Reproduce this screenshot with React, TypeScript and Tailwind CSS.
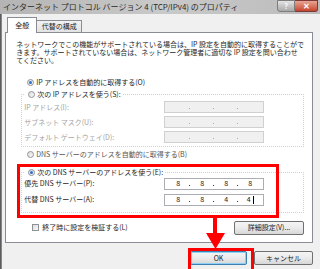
import React from "react";

const JP = "font-['Noto_Sans_CJK_JP','Noto_Sans',sans-serif]";

function Radio({ checked }: { checked?: boolean }) {
  return (
    <span className="flex h-[7px] w-[7px] shrink-0 items-center justify-center rounded-full border border-[#8e9297] bg-gradient-to-br from-[#dcdcdc] to-[#fafafa]">
      {checked && <span className="h-[3px] w-[3px] rounded-full bg-[#2a6fcf]" />}
    </span>
  );
}

function IpField({ values, disabled, cursor }: { values: string[]; disabled?: boolean; cursor?: boolean }) {
  return (
    <div
      className={`flex h-[12px] w-[100px] items-center pl-[2px] border ${
        disabled ? "border-[#d0d0d0] bg-[#f0f0f0]" : "border-[#abadb3] bg-white"
      }`}
    >
      {[0, 1, 2, 3].map(i => (
        <React.Fragment key={i}>
          <span className="flex h-full w-[22px] items-center justify-center text-[7px] leading-none text-[#222]">
            {values[i]}
            {cursor && i === 3 && <span className="ml-[2px] h-[8px] w-[1px] bg-black" />}
          </span>
          {i < 3 && (
            <span className="flex h-full w-[2px] items-end pb-[3px]">
              <span className={`h-[1px] w-[1px] ${disabled ? "bg-[#a8a8a8]" : "bg-[#333]"}`} />
            </span>
          )}
        </React.Fragment>
      ))}
    </div>
  );
}

function Btn({ label, focus, w }: { label: string; focus?: boolean; w: string }) {
  return (
    <div
      className={`flex h-[14px] ${w} items-center justify-center rounded-[2px] border text-[7px] leading-none text-[#222] bg-gradient-to-b from-[#f4f4f4] via-[#ebebeb] to-[#d6d6d6] ${
        focus ? "border-[#3c7fb1] shadow-[inset_0_0_0_1px_#8ed0f5]" : "border-[#707070]"
      }`}
    >
      {label}
    </div>
  );
}

export default function App() {
  return (
    <div className={`relative h-[269px] w-[320px] overflow-hidden bg-[#f0f0f0] ${JP}`}>
      {/* タイトルバー */}
      <div className="flex h-[14px] items-start bg-gradient-to-r from-[#b4b4b4] via-[#c9c9c9] to-[#bcbcbc]">
        <p className="pl-[3px] pt-[2px] text-[8px] leading-[9px] text-[#2a2a2a] whitespace-nowrap">
          インターネット プロトコル バージョン 4 (TCP/IPv4) のプロパティ
        </p>
        <div className="ml-auto mr-[2px] flex">
          <div className="flex h-[12px] w-[18px] items-center justify-center rounded-bl-[3px] border border-[#7d7d7d] bg-gradient-to-b from-[#e4e4e4] to-[#a9a9a9] text-[7px] font-bold leading-none text-white">
            ?
          </div>
          <div className="flex h-[12px] w-[23px] items-center justify-center rounded-br-[3px] border border-l-0 border-[#7a3a3a] bg-gradient-to-b from-[#e8a493] to-[#c5432e] text-[8px] font-bold leading-none text-white">
            ✕
          </div>
        </div>
      </div>

      <div className="flex h-[255px]">
        <div className="w-[3px] bg-gradient-to-r from-[#4a4a4a] to-[#9a9a9a]" />
        <div className="flex flex-1 flex-col pl-[3px] pr-[7px]">
          {/* タブ */}
          <div className="flex h-[18px] items-end pl-[2px] pt-[3px]">
            <div className="relative z-10 -mb-[1px] flex h-[16px] w-[30px] items-center justify-center border border-b-0 border-[#898c95] bg-white text-[7px] text-[#222]">
              全般
            </div>
            <div className="flex h-[12px] w-[45px] items-center justify-center border border-b-0 border-l-0 border-[#898c95] bg-gradient-to-b from-[#f2f2f2] to-[#e3e3e3] text-[7px] text-[#222]">
              代替の構成
            </div>
          </div>

          {/* パネル */}
          <div className="flex h-[211px] flex-col border border-[#898c95] bg-white pl-[10px] pr-[8px] text-[7px] text-[#1e1e1e]">
            <div className="mt-[7px] whitespace-nowrap text-[7px] leading-[8px]">
              <p>ネットワークでこの機能がサポートされている場合は、IP 設定を自動的に取得することがで</p>
              <p>きます。サポートされていない場合は、ネットワーク管理者に適切な IP 設定を問い合わせ</p>
              <p>てください。</p>
            </div>

            <div className="mt-[14px] flex h-[9px] items-center gap-[2px] pl-[11px]">
              <Radio checked />
              <span className="leading-none">IP アドレスを自動的に取得する(O)</span>
            </div>

            <fieldset className="mt-[3px] ml-[5px] h-[57px] border border-dotted border-[#c9d3d8] pl-[2px] pr-0">
              <legend className="flex h-[9px] items-center gap-[2px] pl-[4px] pr-[2px]">
                <Radio />
                <span className="leading-none">次の IP アドレスを使う(S):</span>
              </legend>
              <div className="flex flex-col gap-[3px] pt-[2px] text-[#a3a3a3]">
                {["IP アドレス(I):", "サブネット マスク(U):", "デフォルト ゲートウェイ(D):"].map(l => (
                  <div key={l} className="flex h-[12px] items-center">
                    <span className="w-[140px] leading-none">{l}</span>
                    <IpField values={["", "", "", ""]} disabled />
                  </div>
                ))}
              </div>
            </fieldset>

            <div className="mt-[3px] flex h-[9px] items-center gap-[2px] pl-[11px] text-[#555]">
              <Radio />
              <span className="leading-none">DNS サーバーのアドレスを自動的に取得する(B)</span>
            </div>

            <fieldset className="mt-[9px] ml-[5px] h-[45px] border border-dotted border-[#c9d3d8] pl-[2px] pr-0">
              <legend className="flex h-[9px] items-center gap-[2px] pl-[4px] pr-[2px]">
                <Radio checked />
                <span className="leading-none">次の DNS サーバーのアドレスを使う(E):</span>
              </legend>
              <div className="flex flex-col gap-[3px]">
                <div className="flex h-[13px] items-center">
                  <span className="w-[140px] leading-none">優先 DNS サーバー(P):</span>
                  <IpField values={["8", "8", "8", "8"]} />
                </div>
                <div className="flex h-[13px] items-center">
                  <span className="w-[140px] leading-none">代替 DNS サーバー(A):</span>
                  <IpField values={["8", "8", "4", "4"]} cursor />
                </div>
              </div>
            </fieldset>

            <div className="mt-[8px] flex h-[13px] items-center pl-[16px]">
              <span className="h-[7px] w-[7px] border border-[#8e9297] bg-gradient-to-br from-[#dcdcdc] to-[#fafafa]" />
              <span className="ml-[3px] leading-none">終了時に設定を検証する(L)</span>
              <div className="ml-auto">
                <Btn label="詳細設定(V)..." w="w-[70px]" />
              </div>
            </div>
          </div>

          {/* 下部ボタン */}
          <div className="flex justify-end gap-[7px] pt-[8px]">
            <Btn label="OK" focus w="w-[57px]" />
            <Btn label="キャンセル" w="w-[59px]" />
          </div>
        </div>
      </div>

      {/* 注釈 (赤枠と矢印) */}
      <div className="absolute left-[17px] top-[164px] h-[54px] w-[262px] border-[3px] border-[#ff0000]" />
      <svg className="absolute left-[203px] top-[215px]" width="26" height="36" viewBox="0 0 26 36">
        <rect x="10" y="0" width="4" height="19" fill="#ff0000" />
        <polygon points="3,18 22,18 12.5,34" fill="#ff0000" />
      </svg>
      <div className="absolute left-[188px] top-[248px] h-[24px] w-[66px] border-[3px] border-[#ff0000]" />
    </div>
  );
}
